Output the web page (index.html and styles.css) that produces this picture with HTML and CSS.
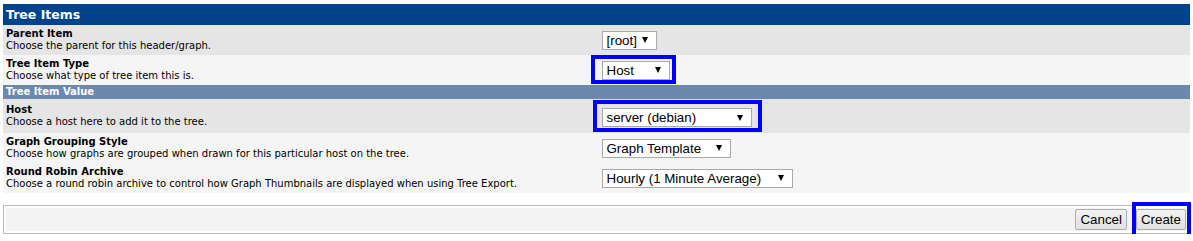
FILE: index.html
```html
<!DOCTYPE html>
<html>
<head>
<meta charset="utf-8">
<link rel="stylesheet" href="styles.css">
</head>
<body>
<div class="panel">
  <div class="hdr">Tree Items</div>
  <div class="row odd">
    <div class="lbl"><div class="name">Parent Item</div><div class="desc">Choose the parent for this header/graph.</div></div>
    <div class="ctl"><span class="sel w-root"><span class="txt">[root]</span><i class="arr"></i></span></div>
  </div>
  <div class="row even">
    <div class="lbl"><div class="name">Tree Item Type</div><div class="desc">Choose what type of tree item this is.</div></div>
    <div class="ctl"><span class="sel w-type mark mark-type"><span class="txt">Host</span><i class="arr"></i></span></div>
  </div>
  <div class="sub">Tree Item Value</div>
  <div class="row odd tall">
    <div class="lbl"><div class="name">Host</div><div class="desc">Choose a host here to add it to the tree.</div></div>
    <div class="ctl"><span class="sel w-host mark mark-host"><span class="txt">server (debian)</span><i class="arr"></i></span></div>
  </div>
  <div class="row even">
    <div class="lbl"><div class="name">Graph Grouping Style</div><div class="desc">Choose how graphs are grouped when drawn for this particular host on the tree.</div></div>
    <div class="ctl"><span class="sel w-graph"><span class="txt">Graph Template</span><i class="arr"></i></span></div>
  </div>
  <div class="row even">
    <div class="lbl"><div class="name">Round Robin Archive</div><div class="desc">Choose a round robin archive to control how Graph Thumbnails are displayed when using Tree Export.</div></div>
    <div class="ctl"><span class="sel w-rra"><span class="txt">Hourly (1 Minute Average)</span><i class="arr"></i></span></div>
  </div>
</div>
<div class="actions">
  <div class="actions-in">
    <button class="btn">Cancel</button>
    <button class="btn mark mark-create">Create</button>
  </div>
</div>
</body>
</html>
```
FILE: styles.css
```css
html, body { margin: 0; padding: 0; background: #fff; }
body { padding: 4px 3px 0 3px; font-family: "DejaVu Sans", Verdana, sans-serif; color: #000; }

.panel { display: flex; flex-direction: column; }

.hdr {
  height: 21px;
  background: #00438c;
  color: #fff;
  font-weight: bold;
  font-size: 12.5px;
  line-height: 21px;
  padding-left: 3px;
}

.sub {
  height: 14px;
  background: #6d88ad;
  color: #fff;
  font-weight: bold;
  font-size: 10px;
  line-height: 14px;
  padding-left: 3px;
}

.row {
  display: grid;
  grid-template-columns: 1fr 1fr;
  height: 30px;
  align-items: center;
}
.row.tall { height: 34px; }
.odd { background: #e5e5e5; }
.even { background: #f5f5f5; }

.lbl { padding-left: 3px; }
.name { font-weight: bold; font-size: 10px; line-height: 12px; }
.desc { font-size: 10px; line-height: 12px; }

.ctl { padding-left: 5px; display: flex; align-items: center; }
.tall .ctl { padding-top: 3px; }

.sel {
  position: relative;
  box-sizing: border-box;
  height: 19px;
  display: inline-flex;
  align-items: center;
  background: #fff;
  border: 1px solid #a9a9a9;
  padding: 0 8px 0 4px;
  font-family: "Liberation Sans", Arial, sans-serif;
  font-size: 13.33px;
}
.sel .txt { white-space: nowrap; }
.arr {
  margin-left: auto;
  width: 0; height: 0;
  border-left: 3px solid transparent;
  border-right: 3px solid transparent;
  border-top: 6px solid #000;
}
.w-root { width: 55px; }
.w-type { width: 68px; }
.w-host { width: 150px; }
.w-graph { width: 129px; }
.w-rra { width: 191px; }

.mark::after {
  content: "";
  position: absolute;
  border: 4px solid #0000ff;
  pointer-events: none;
}
.mark-type::after { left: -12px; right: -7px; top: -7px; bottom: -5px; }
.mark-host::after { left: -10px; right: -11px; top: -9px; bottom: -6px; }
.mark-create::after { left: -5px; right: -6px; top: -8px; bottom: -9px; }

.actions {
  margin-top: 12px;
  border: 1px solid #bbb;
  padding: 2px;
  background: #fff;
}
.actions-in {
  background: #f3f3f3;
  display: flex;
  justify-content: flex-end;
  gap: 9px;
  padding: 1px 1px 1px 0;
}
.btn {
  position: relative;
  box-sizing: border-box;
  height: 21px;
  margin: 0;
  padding: 0 4px;
  border: 1px solid #adadad;
  border-radius: 2px;
  background: linear-gradient(#f2f2f2, #e1e1e1);
  font-family: "Liberation Sans", Arial, sans-serif;
  font-size: 13.33px;
  color: #000;
}
```
